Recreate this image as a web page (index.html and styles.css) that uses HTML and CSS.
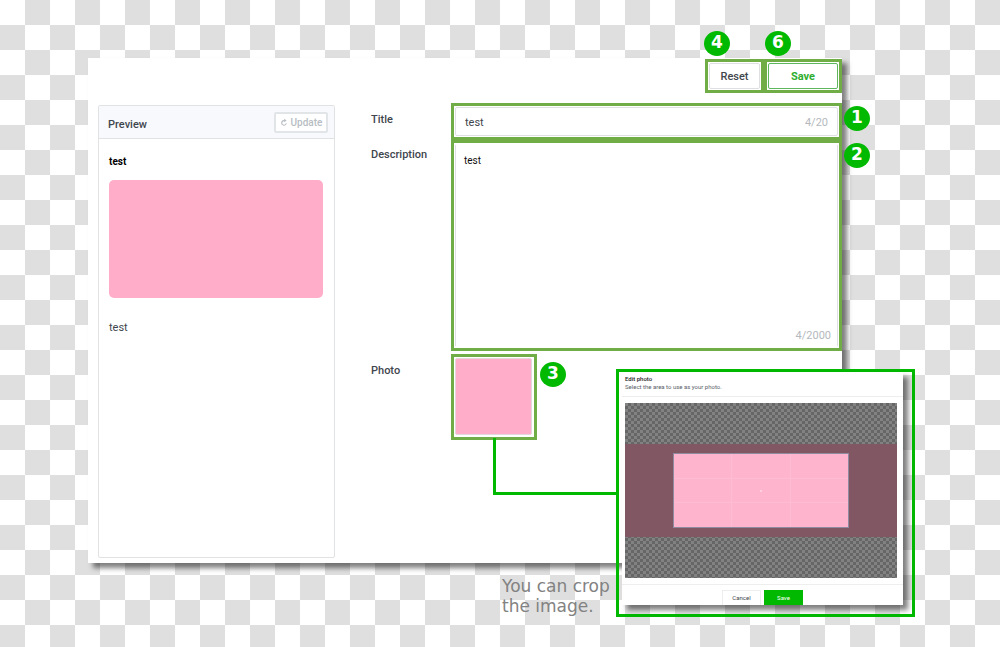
FILE: index.html
```html
<!DOCTYPE html>
<html lang="en">
<head>
<meta charset="utf-8">
<title>Card editor guide</title>
<link rel="stylesheet" href="styles.css">
</head>
<body>
<main class="panel">
  <div class="toolbar">
    <div class="mark mark-reset"><button class="btn" type="button">Reset</button><span class="badge badge-top">4</span></div>
    <div class="mark mark-save"><button class="btn btn-outline" type="button">Save</button><span class="badge badge-top badge-save">6</span></div>
  </div>
  <div class="columns">
    <section class="preview">
      <header class="preview-head">
        <h2 class="preview-title">Preview</h2>
        <button class="update" type="button">
          <svg class="update-icon" viewBox="0 0 8 8" aria-hidden="true"><path d="M4.8 2.6H3.9A2.3 2.3 0 1 0 6.3 5.2" fill="none" stroke="currentColor" stroke-width="1.1"/><path d="M4.2 .8L6.6 2.6L4.2 4.2Z" fill="currentColor"/></svg>
          Update
        </button>
      </header>
      <div class="preview-body">
        <h3 class="card-title">test</h3>
        <div class="card-image"></div>
        <p class="card-text">test</p>
      </div>
    </section>
    <form class="form">
      <label class="label" for="title">Title</label>
      <div class="mark mark-title">
        <div class="field"><input class="input" id="title" type="text" value="test"><span class="count">4/20</span></div>
        <span class="badge badge-side">1</span>
      </div>
      <label class="label" for="description">Description</label>
      <div class="mark mark-description">
        <div class="field field-area"><textarea class="textarea" id="description">test</textarea><span class="count count-area">4/2000</span></div>
        <span class="badge badge-side">2</span>
      </div>
      <span class="label label-photo">Photo</span>
      <div class="mark mark-photo">
        <div class="photo"></div>
        <span class="badge badge-photo">3</span>
        <span class="connector"></span>
      </div>
    </form>
  </div>
  <p class="note">You can crop<br>the image.</p>
  <div class="callout">
    <section class="dialog">
      <header class="dialog-head">
        <h2 class="dialog-title">Edit photo</h2>
        <p class="dialog-text">Select the area to use as your photo.</p>
      </header>
      <div class="cropper">
        <div class="crop-image">
          <div class="crop-area"></div>
        </div>
      </div>
      <footer class="dialog-foot">
        <button class="small-btn" type="button">Cancel</button>
        <button class="small-btn small-btn-primary" type="button">Save</button>
      </footer>
    </section>
  </div>
</main>
</body>
</html>
```
FILE: styles.css
```css
* { box-sizing: border-box; }

body {
  margin: 0;
  padding: 58px 158px 84px 88px;
  font-family: Roboto, "Liberation Sans", sans-serif;
  font-size: 11px;
  color: #3f464d;
  background: repeating-conic-gradient(#dfdfdf 0 25%, #fff 0 50%) 0 0 / 50px 50px;
}

h2, h3, p { margin: 0; }

button, input, textarea { font-family: inherit; }

.panel {
  position: relative;
  padding: 1px 0 5px 10px;
  background: #fff;
  box-shadow: 5px 5px 5px rgba(0, 0, 0, 0.5);
}

.toolbar { display: flex; justify-content: flex-end; }

.mark {
  position: relative;
  padding: 1px;
  border: 3px solid #70ad47;
}

.mark-reset { width: 59px; height: 34px; }
.mark-save { width: 78px; height: 34px; }

.btn {
  display: block;
  width: 100%;
  height: 26px;
  padding: 0;
  border: 1px solid #dfdfe2;
  border-radius: 2px;
  background: #fff;
  color: #3f464d;
  font-size: 11px;
  font-weight: 500;
}

.btn-outline { border-color: #5db75d; color: #2fae2f; font-weight: 700; }

.badge {
  position: absolute;
  width: 26px;
  height: 25px;
  border-radius: 50%;
  background: #00b900;
  color: #fff;
  font: bold 17px/22px "DejaVu Sans", sans-serif;
  text-align: center;
}

.badge-top { left: -4px; top: -31px; }
.badge-save { left: -2px; }
.badge-side { right: -31px; top: 0; }
.badge-photo { left: 86px; top: 5px; }

.columns {
  display: grid;
  grid-template-columns: 237px 1fr;
  gap: 36px;
  margin-top: 10px;
}

.preview {
  min-height: 453px;
  margin-top: 2px;
  border: 1px solid #e0e2e4;
  border-radius: 2px;
}

.preview-head {
  display: flex;
  align-items: center;
  justify-content: space-between;
  height: 33px;
  padding: 0 6px 0 9px;
  border-bottom: 1px solid #e0e2e4;
  background: #f8f9fd;
}

.preview-title { padding-top: 4px; font-size: 11px; font-weight: 500; }

.update {
  display: flex;
  align-items: center;
  justify-content: center;
  gap: 3px;
  width: 54px;
  height: 21px;
  padding: 0;
  border: 2px solid #e2e5e8;
  border-radius: 2px;
  background: #fff;
  color: #b7bdc3;
  font-size: 10px;
  font-weight: 500;
}

.update-icon { width: 8px; height: 8px; }

.preview-body { padding: 16px 11px 16px 10px; }
.card-title { color: #000; font-size: 10px; line-height: 14px; font-weight: 700; }

.card-image {
  height: 118px;
  margin-top: 11px;
  border-radius: 5px;
  background: #ffadc8;
}

.card-text { margin-top: 23px; line-height: 14px; }

.form {
  display: grid;
  grid-template-columns: 80px 1fr;
  grid-template-rows: 37px 214px 86px;
}

.label { padding-top: 9px; font-size: 11px; line-height: 16px; font-weight: 500; }
.label[for="description"] { padding-top: 7px; }

.mark-description { height: 211px; }
.mark-photo { width: 86px; height: 86px; }

.field {
  display: flex;
  align-items: center;
  height: 100%;
  padding: 0 9px;
  border: 1px solid #dfe0e4;
  border-radius: 2px;
}

.field-area { position: relative; padding: 0; border-top-color: #fff; border-bottom-color: #fff; }

.input {
  flex: 1;
  min-width: 0;
  padding: 1px 0 0;
  border: 0;
  outline: 0;
  background: none;
  color: #3f464d;
  font-size: 11px;
}

.count { padding-top: 1px; color: #b4b9be; font-size: 11px; }
.count-area { position: absolute; right: 6px; bottom: 4px; }

.textarea {
  width: 100%;
  height: 100%;
  padding: 9px 8px;
  border: 0;
  outline: 0;
  resize: none;
  background: none;
  color: #111;
  font-size: 10px;
  line-height: 14px;
}

.photo {
  width: 77px;
  height: 77px;
  border: 1px solid #e3d8dc;
  border-radius: 2px;
  background: #ffadc8;
}

.connector {
  position: absolute;
  left: 39px;
  top: 81px;
  width: 123px;
  height: 57px;
  border: solid #00b900;
  border-width: 0 0 3px 3px;
}

.note {
  position: absolute;
  left: 414px;
  top: 518px;
  color: #828282;
  font: 17px/20px "DejaVu Sans", sans-serif;
}

.callout {
  position: absolute;
  top: 311px;
  right: -73px;
  width: 299px;
  height: 248px;
  padding: 0 9px 9px 3px;
  border: 3px solid #00b900;
}

.dialog {
  padding-top: 3px;
  background: #fff;
  box-shadow: 5px 5px 5px rgba(0, 0, 0, 0.5);
}

.dialog-head {
  height: 22px;
  padding-left: 3px;
  border-bottom: 1px solid #eee;
  font-size: 6px;
  line-height: 8px;
}

.dialog-title { color: #222; font-size: 6px; font-weight: 500; }
.dialog-text { color: #59616a; font-size: 6px; }

.cropper {
  height: 175px;
  margin: 6px 6px 6px 3px;
  padding: 41px 0;
  background: repeating-conic-gradient(#666 0 25%, #828282 0 50%) 0 0 / 6px 6px;
}

.crop-image { height: 93px; padding: 9px 48px; background: #805763; }

.crop-area {
  height: 75px;
  border: 1px solid #8f8a9f;
  background:
    linear-gradient(#ffcfdf, #ffcfdf) 50% 50% / 2px 2px no-repeat,
    linear-gradient(#ffbdd3, #ffbdd3) 33% 0 / 1px 100% no-repeat,
    linear-gradient(#ffbdd3, #ffbdd3) 67% 0 / 1px 100% no-repeat,
    linear-gradient(#ffbdd3, #ffbdd3) 0 33% / 100% 1px no-repeat,
    linear-gradient(#ffbdd3, #ffbdd3) 0 67% / 100% 1px no-repeat,
    #ffb4cd;
}

.dialog-foot {
  display: flex;
  justify-content: center;
  gap: 3px;
  height: 21px;
  padding-top: 5px;
  border-top: 1px solid #eee;
}

.small-btn {
  width: 39px;
  height: 15px;
  padding: 0 0 2px;
  border: 1px solid #eee;
  border-bottom: 0;
  background: #fff;
  color: #3f464d;
  font-size: 6px;
}

.small-btn-primary { border-color: #00b900; background: #00b900; color: #fff; }
```
